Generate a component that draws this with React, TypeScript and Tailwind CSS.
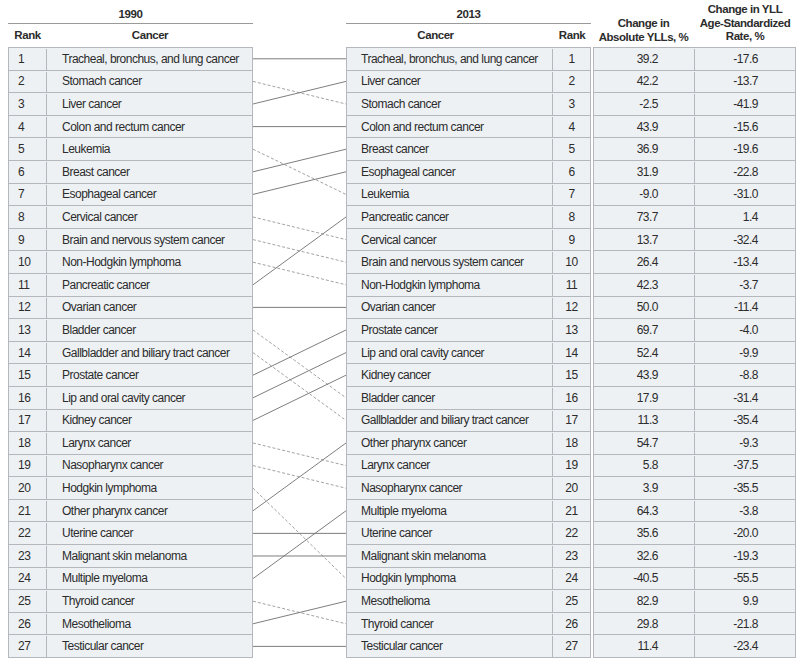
import React from "react";

const left1990 = [
  "Tracheal, bronchus, and lung cancer",
  "Stomach cancer",
  "Liver cancer",
  "Colon and rectum cancer",
  "Leukemia",
  "Breast cancer",
  "Esophageal cancer",
  "Cervical cancer",
  "Brain and nervous system cancer",
  "Non-Hodgkin lymphoma",
  "Pancreatic cancer",
  "Ovarian cancer",
  "Bladder cancer",
  "Gallbladder and biliary tract cancer",
  "Prostate cancer",
  "Lip and oral cavity cancer",
  "Kidney cancer",
  "Larynx cancer",
  "Nasopharynx cancer",
  "Hodgkin lymphoma",
  "Other pharynx cancer",
  "Uterine cancer",
  "Malignant skin melanoma",
  "Multiple myeloma",
  "Thyroid cancer",
  "Mesothelioma",
  "Testicular cancer",
];

const right2013: [string, string, string][] = [
  ["Tracheal, bronchus, and lung cancer", "39.2", "-17.6"],
  ["Liver cancer", "42.2", "-13.7"],
  ["Stomach cancer", "-2.5", "-41.9"],
  ["Colon and rectum cancer", "43.9", "-15.6"],
  ["Breast cancer", "36.9", "-19.6"],
  ["Esophageal cancer", "31.9", "-22.8"],
  ["Leukemia", "-9.0", "-31.0"],
  ["Pancreatic cancer", "73.7", "1.4"],
  ["Cervical cancer", "13.7", "-32.4"],
  ["Brain and nervous system cancer", "26.4", "-13.4"],
  ["Non-Hodgkin lymphoma", "42.3", "-3.7"],
  ["Ovarian cancer", "50.0", "-11.4"],
  ["Prostate cancer", "69.7", "-4.0"],
  ["Lip and oral cavity cancer", "52.4", "-9.9"],
  ["Kidney cancer", "43.9", "-8.8"],
  ["Bladder cancer", "17.9", "-31.4"],
  ["Gallbladder and biliary tract cancer", "11.3", "-35.4"],
  ["Other pharynx cancer", "54.7", "-9.3"],
  ["Larynx cancer", "5.8", "-37.5"],
  ["Nasopharynx cancer", "3.9", "-35.5"],
  ["Multiple myeloma", "64.3", "-3.8"],
  ["Uterine cancer", "35.6", "-20.0"],
  ["Malignant skin melanoma", "32.6", "-19.3"],
  ["Hodgkin lymphoma", "-40.5", "-55.5"],
  ["Mesothelioma", "82.9", "9.9"],
  ["Thyroid cancer", "29.8", "-21.8"],
  ["Testicular cancer", "11.4", "-23.4"],
];

const ROW = 22.6;
const FONT = "'Liberation Sans', Arial, sans-serif";

function Connectors() {
  const h = 1 + ROW * 27;
  const cy = (i: number) => 1 + ROW * i + 10.8;
  return (
    <svg width={93} height={h} viewBox={`0 0 93 ${h}`} className="block">
      {left1990.map((name, i) => {
        const j = right2013.findIndex((r) => r[0] === name);
        const dashed = j > i;
        return (
          <line
            key={name}
            x1={0}
            y1={cy(i)}
            x2={93}
            y2={cy(j)}
            stroke={dashed ? "#8a8a8a" : "#6f6f6f"}
            strokeWidth={dashed ? 0.8 : 0.9}
            strokeDasharray={dashed ? "3 2" : undefined}
          />
        );
      })}
    </svg>
  );
}

const cellText = "text-[12px] leading-[15px] tracking-[-0.5px] text-[#2c2c2c] pt-[1px]";
const headText = "text-[11.5px] leading-[13.5px] tracking-[-0.45px] font-bold text-[#2c2c2c]";

export default function App() {
  return (
    <div
      className="w-[800px] h-[664px] bg-white overflow-hidden"
      style={{ fontFamily: FONT }}
    >
      <div className="flex pl-[8px]">
        {/* 1990 */}
        <div className="w-[245px] shrink-0">
          <div className="h-[47px] flex flex-col">
            <div className={`h-[24px] border-b border-[#9a9a9a] flex justify-center pt-[8px] ${headText}`}>
              1990
            </div>
            <div className={`h-[23px] flex items-center ${headText}`}>
              <div className="w-[39px] shrink-0 text-center">Rank</div>
              <div className="flex-1 text-center">Cancer</div>
            </div>
          </div>
          <div className="border-t border-l border-r border-[#b4b8bd] bg-[#eef1f4]">
            {left1990.map((name, i) => (
              <div
                key={name}
                className={`h-[22.6px] flex items-center border-b border-[#b4b8bd] ${cellText}`}
              >
                <div className="w-[38px] shrink-0 h-full border-r border-[#b4b8bd] pl-[9px] flex items-center">
                  {i + 1}
                </div>
                <div className="flex-1 pl-[15px] whitespace-nowrap">{name}</div>
              </div>
            ))}
          </div>
        </div>

        {/* connectors */}
        <div className="w-[93px] shrink-0 pt-[47px]">
          <Connectors />
        </div>

        {/* 2013 */}
        <div className="w-[245px] shrink-0">
          <div className="h-[47px] flex flex-col">
            <div className={`h-[24px] border-b border-[#9a9a9a] flex justify-center pt-[8px] ${headText}`}>
              2013
            </div>
            <div className={`h-[23px] flex items-center ${headText}`}>
              <div className="w-[207px] shrink-0 text-center pr-[28px]">Cancer</div>
              <div className="flex-1 text-center">Rank</div>
            </div>
          </div>
          <div className="border-t border-l border-r border-[#b4b8bd] bg-[#eef1f4]">
            {right2013.map((r, i) => (
              <div
                key={r[0]}
                className={`h-[22.6px] flex items-center border-b border-[#b4b8bd] ${cellText}`}
              >
                <div className="w-[206px] shrink-0 h-full border-r border-[#b4b8bd] pl-[14px] flex items-center whitespace-nowrap">
                  {r[0]}
                </div>
                <div className="flex-1 text-center">{i + 1}</div>
              </div>
            ))}
          </div>
        </div>

        {/* changes */}
        <div className="w-[203px] shrink-0 ml-[2px]">
          <div className={`h-[47px] flex ${headText}`}>
            <div className="w-[101px] shrink-0 text-center pt-[17px]">
              Change in
              <br />
              Absolute YLLs, %
            </div>
            <div className="flex-1 text-center pt-[3px]">
              Change in YLL
              <br />
              Age-Standardized
              <br />
              Rate, %
            </div>
          </div>
          <div className="border-t border-l border-r border-[#b4b8bd] bg-[#eef1f4]">
            {right2013.map((r) => (
              <div
                key={r[0]}
                className={`h-[22.6px] flex items-center border-b border-[#b4b8bd] ${cellText}`}
              >
                <div className="w-[101px] shrink-0 h-full border-r border-[#b4b8bd] pr-[36px] flex items-center justify-end">
                  {r[1]}
                </div>
                <div className="flex-1 pr-[37px] text-right">{r[2]}</div>
              </div>
            ))}
          </div>
        </div>
      </div>
    </div>
  );
}
